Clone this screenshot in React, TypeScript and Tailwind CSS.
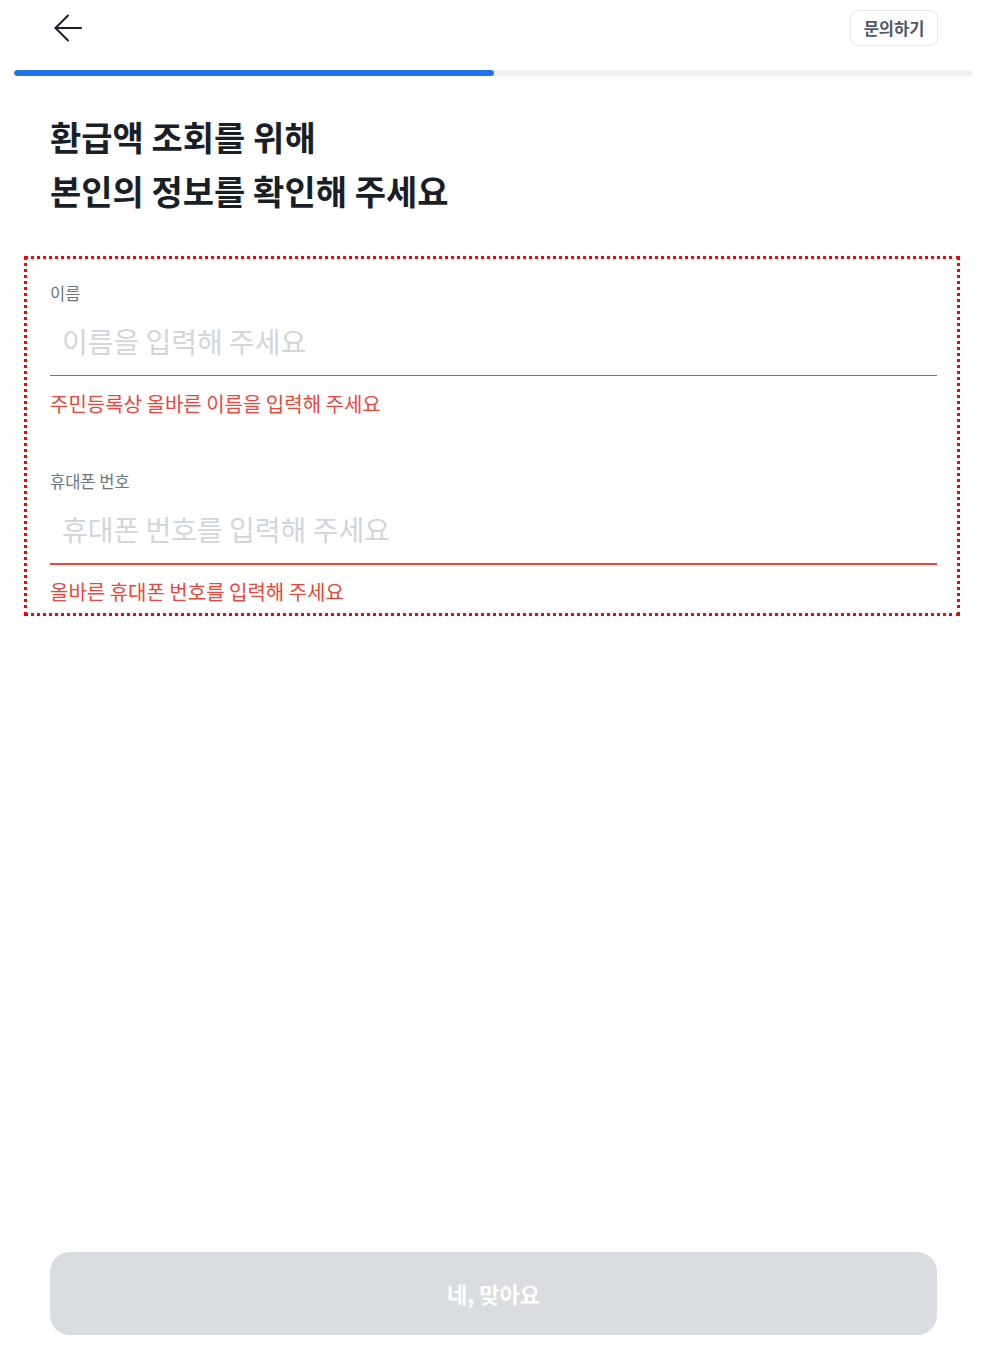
import React from "react";

export default function App() {
  const font = { fontFamily: '"Noto Sans CJK KR", "Noto Sans", sans-serif' };
  return (
    <div style={font} className="h-screen w-full bg-white flex flex-col">
      {/* header */}
      <div className="flex items-center justify-between h-[56px] pl-[54px] pr-[57px]">
        <svg width="28" height="28" viewBox="0 0 28 28" fill="none" stroke="#191f28" strokeWidth="2" strokeLinecap="round" strokeLinejoin="round">
          <path d="M27 14H1.5" />
          <path d="M14 1.5L1.5 14L14 26.5" />
        </svg>
        <button className="h-[36px] w-[88px] rounded-[8px] border border-[#e5e8eb] bg-white text-[16.5px] font-bold text-[#4e5968] leading-none flex items-center justify-center">
          문의하기
        </button>
      </div>

      {/* progress */}
      <div className="ml-[14px] mr-[22px] mt-[14px] h-[6px] rounded-full bg-[#f0f1f3] overflow-hidden">
        <div className="h-full w-1/2 rounded-full bg-[#2272eb]" />
      </div>

      {/* title */}
      <h1 className="mt-[34px] px-[50px] text-[34px] font-bold leading-[54px] text-[#191f28]">
        환급액 조회를 위해
        <br />
        본인의 정보를 확인해 주세요
      </h1>

      {/* form */}
      <div className="mt-[38px] ml-[24px] mr-[35px] border-[3px] border-dotted border-[#ff0000] pl-[23px] pr-[20px] pt-[23px] pb-[8px]">
        <div className="text-[16.5px] leading-[22px] text-[#6b7684]">이름</div>
        <div className="mt-[13px] pb-[10px] border-b border-[#c9533f]">
          <input
            className="h-[48px] w-full pl-3 text-[28px] leading-[48px] outline-none placeholder:text-[#d1d6db] text-[#191f28]"
            placeholder="이름을 입력해 주세요"
            style={font}
          />
        </div>
        <div className="mt-[15px] text-[20px] leading-[26px] text-[#e8483b]">
          주민등록상 올바른 이름을 입력해 주세요
        </div>

        <div className="mt-[53px] text-[16.5px] leading-[22px] text-[#6b7684]">휴대폰 번호</div>
        <div className="mt-[13px] pb-[10px] border-b-2 border-[#e5483a]">
          <input
            className="h-[48px] w-full pl-3 text-[28px] leading-[48px] outline-none placeholder:text-[#d1d6db] text-[#191f28]"
            placeholder="휴대폰 번호를 입력해 주세요"
            style={font}
          />
        </div>
        <div className="mt-[14px] text-[20px] leading-[26px] text-[#e8483b]">
          올바른 휴대폰 번호를 입력해 주세요
        </div>
      </div>

      {/* bottom button */}
      <div className="mt-auto pl-[50px] pr-[58px] pb-[14px]">
        <button className="h-[83px] w-full rounded-[20px] bg-[#d9dce1] text-[22px] font-bold text-white">
          네, 맞아요
        </button>
      </div>
    </div>
  );
}
